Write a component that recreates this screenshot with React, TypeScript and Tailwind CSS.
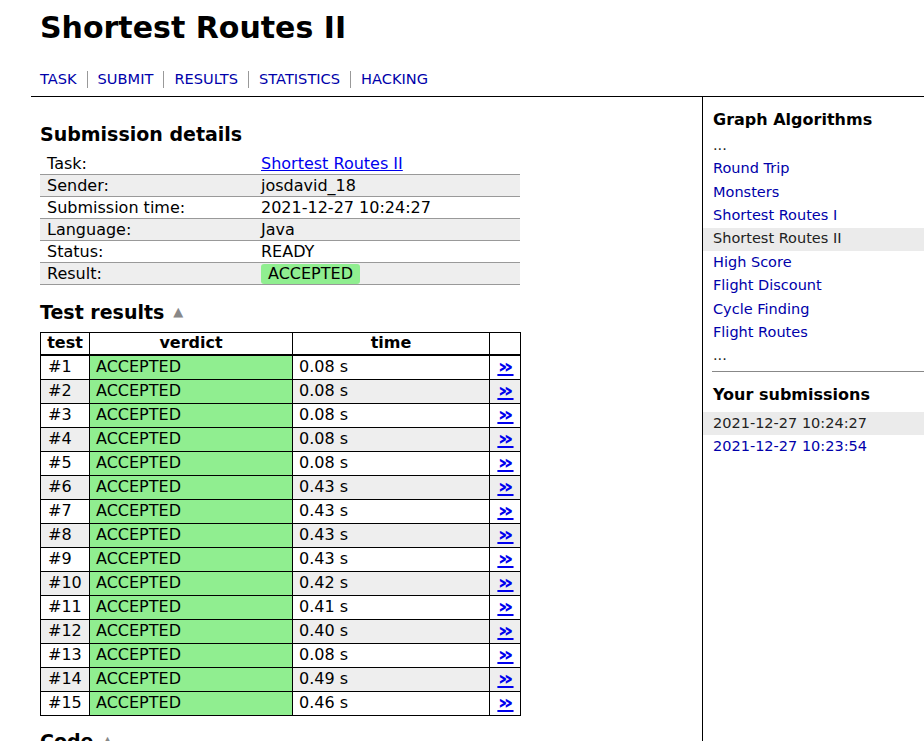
import React from 'react';

const navItems = ['TASK', 'SUBMIT', 'RESULTS', 'STATISTICS', 'HACKING'];

const details: [string, React.ReactNode][] = [
  ['Task:', <a className="text-[#0000ee] underline cursor-pointer">Shortest Routes II</a>],
  ['Sender:', 'josdavid_18'],
  ['Submission time:', '2021-12-27 10:24:27'],
  ['Language:', 'Java'],
  ['Status:', 'READY'],
  ['Result:', <span className="bg-[#90ee90] rounded-[3px] px-[7px] inline-block leading-[20px]">ACCEPTED</span>],
];

const times = ['0.08', '0.08', '0.08', '0.08', '0.08', '0.43', '0.43', '0.43', '0.43', '0.42', '0.41', '0.40', '0.08', '0.49', '0.46'];

const tasks = [
  { name: '...', plain: true },
  { name: 'Round Trip' },
  { name: 'Monsters' },
  { name: 'Shortest Routes I' },
  { name: 'Shortest Routes II', current: true },
  { name: 'High Score' },
  { name: 'Flight Discount' },
  { name: 'Cycle Finding' },
  { name: 'Flight Routes' },
  { name: '...', plain: true },
];

const submissions = [
  { time: '2021-12-27 10:24:27', current: true },
  { time: '2021-12-27 10:23:54' },
];

const App: React.FC = () => {
  return (
    <div className="min-h-[741px] bg-white text-black overflow-hidden" style={{ fontFamily: '"DejaVu Sans", Verdana, sans-serif' }}>
      <div className="ml-[31px]">
        <header className="pl-[9px] pt-[9px] pb-[7px] border-b border-black">
          <h1 className="text-[30px] font-bold leading-[38px]">Shortest Routes II</h1>
          <nav className="mt-[22px] flex items-center text-[14.6px] leading-[20px]">
            {navItems.map((item, i) => (
              <React.Fragment key={item}>
                {i > 0 && <span className="w-px h-[17px] bg-[#999] mx-[10px]" />}
                <a className="text-[#0000aa] cursor-pointer">{item}</a>
              </React.Fragment>
            ))}
          </nav>
        </header>

        <div className="flex">
          <main className="w-[672px] shrink-0 border-r border-black pl-[9px] pb-10">
            <h2 className="mt-[25px] text-[19px] font-bold leading-[24px]">Submission details</h2>
            <div className="mt-[7px] w-[480px] text-[16px]">
              {details.map(([label, value], i) => (
                <div key={label} className={`flex h-[22px] items-center border-b border-[#999] ${i % 2 === 1 ? 'bg-[#eeeeee]' : 'bg-white'}`}>
                  <div className="w-[221px] pl-[7px]">{label}</div>
                  <div>{value}</div>
                </div>
              ))}
            </div>

            <h2 className="mt-[15px] text-[19px] font-bold leading-[24px] flex items-center">
              Test results
              <span className="ml-[9px] text-[13px] text-[#888]">▲</span>
            </h2>
            <table className="mt-[8px] w-[480px] border-collapse text-[16px] table-fixed">
              <colgroup>
                <col className="w-[49px]" />
                <col className="w-[203px]" />
                <col className="w-[197px]" />
                <col className="w-[31px]" />
              </colgroup>
              <thead>
                <tr className="h-[22px]">
                  <th className="border border-black border-b-2 font-bold p-0 leading-[20px]">test</th>
                  <th className="border border-black border-b-2 font-bold p-0 leading-[20px]">verdict</th>
                  <th className="border border-black border-b-2 font-bold p-0 leading-[20px]">time</th>
                  <th className="border border-black border-b-2 p-0"></th>
                </tr>
              </thead>
              <tbody>
                {times.map((t, i) => {
                  const bg = i % 2 === 1 ? 'bg-[#eeeeee]' : 'bg-white';
                  return (
                    <tr key={i} className="h-[24px]">
                      <td className={`border border-black px-[7px] py-0 leading-[22px] ${bg}`}>#{i + 1}</td>
                      <td className="border border-black px-[6px] py-0 leading-[22px] bg-[#90ee90]">ACCEPTED</td>
                      <td className={`border border-black px-[6px] py-0 leading-[22px] ${bg}`}>{t} s</td>
                      <td className={`border border-black p-0 text-center leading-[22px] ${bg}`}>
                        <a className="text-[#0000ee] underline decoration-2 font-extrabold cursor-pointer text-[20px] leading-[20px] inline-block scale-x-125">»</a>
                      </td>
                    </tr>
                  );
                })}
              </tbody>
            </table>

            <h2 className="mt-[13px] text-[19px] font-bold leading-[24px] flex items-center">
              Code
              <span className="ml-[9px] text-[13px] text-[#888]">▲</span>
            </h2>
          </main>

          <aside className="flex-1 text-[14.5px]">
            <h3 className="mt-[12px] pl-[10px] text-[16px] font-bold leading-[22px]">Graph Algorithms</h3>
            <ul className="mt-[3px]">
              {tasks.map((t, i) => (
                <li key={i} className={`h-[23.4px] flex items-center pl-[10px] ${t.current ? 'bg-[#ebebeb]' : ''}`}>
                  {t.plain || t.current ? (
                    <span className="text-[#222]">{t.name}</span>
                  ) : (
                    <a className="text-[#0000aa] cursor-pointer">{t.name}</a>
                  )}
                </li>
              ))}
            </ul>
            <div className="ml-[9px] mt-[3px] border-t border-[#888]" />
            <h3 className="mt-[12px] pl-[10px] text-[16px] font-bold leading-[22px]">Your submissions</h3>
            <ul className="mt-[6px]">
              {submissions.map((s) => (
                <li key={s.time} className={`h-[23.4px] flex items-center pl-[10px] ${s.current ? 'bg-[#ebebeb]' : ''}`}>
                  {s.current ? (
                    <span className="text-[#222]">{s.time}</span>
                  ) : (
                    <a className="text-[#0000aa] cursor-pointer">{s.time}</a>
                  )}
                </li>
              ))}
            </ul>
          </aside>
        </div>
      </div>
    </div>
  );
};

export default App;
